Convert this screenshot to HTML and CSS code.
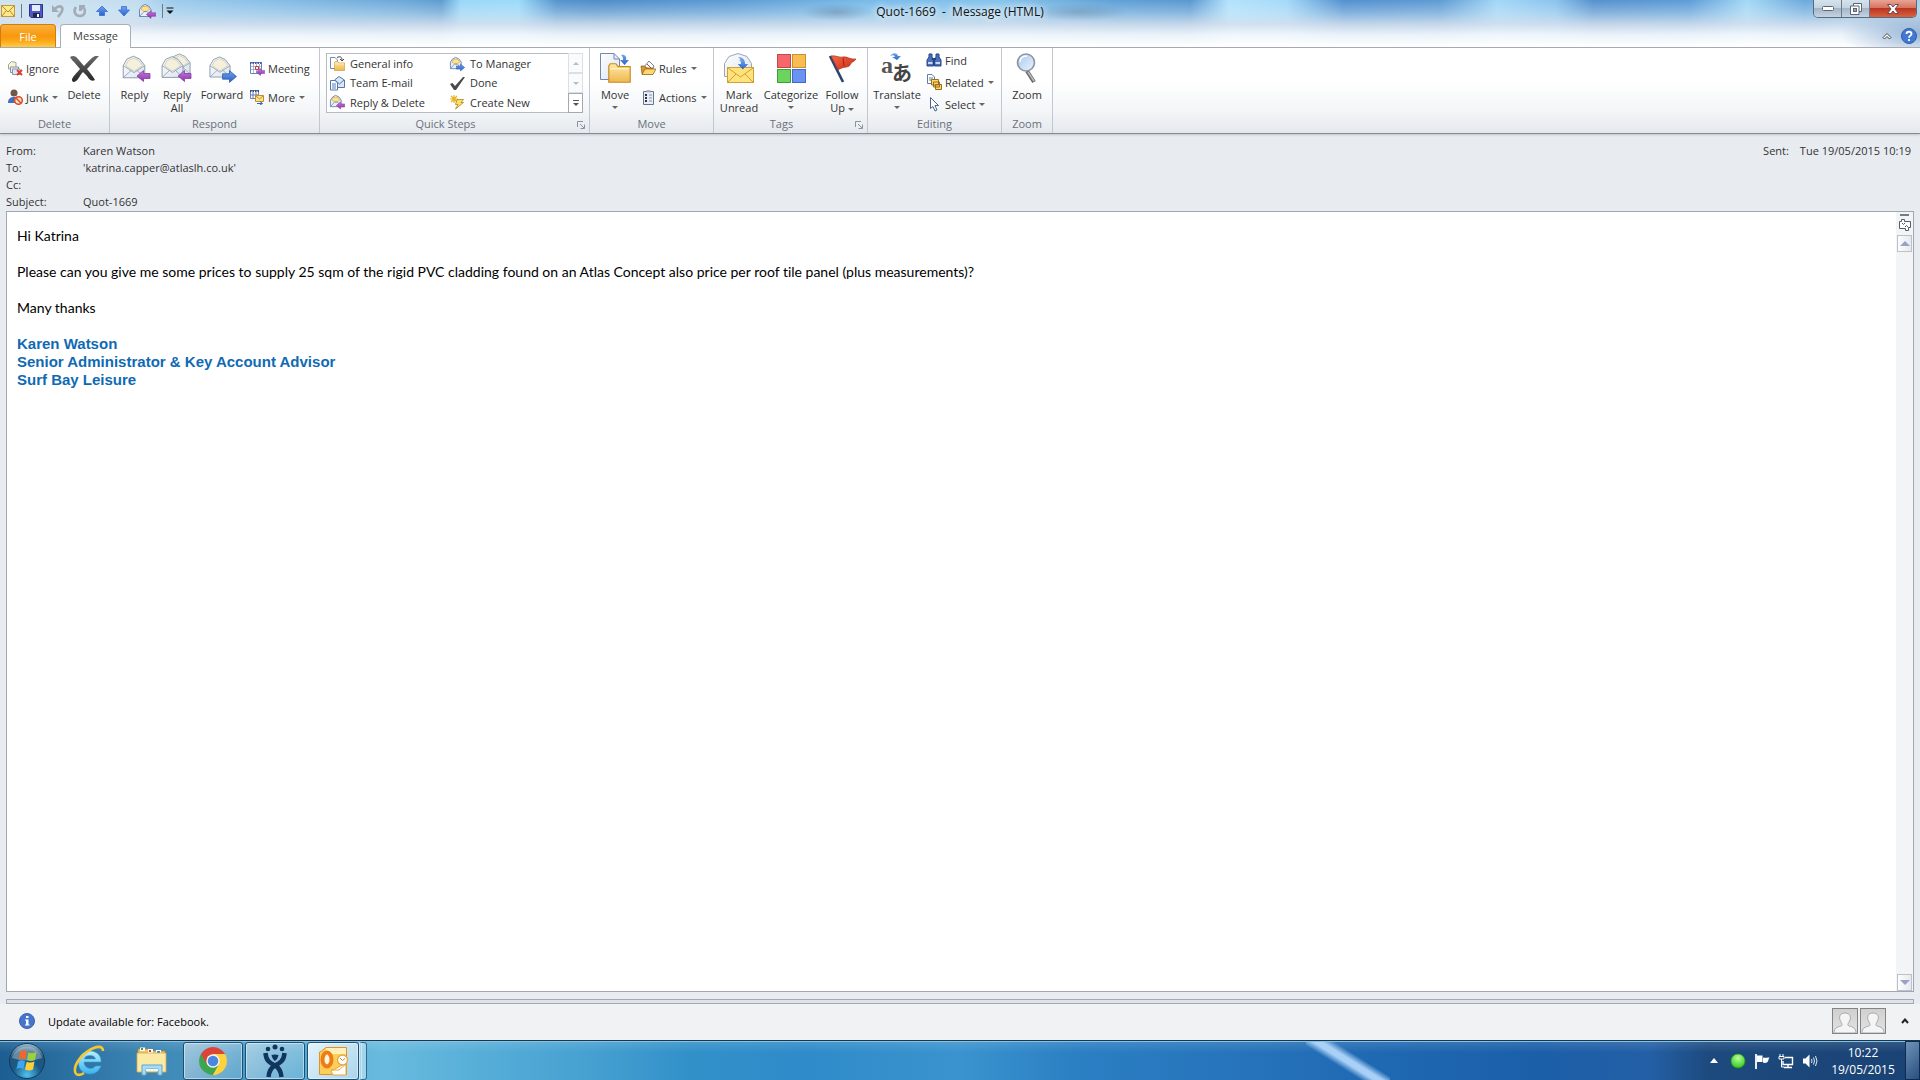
FILE: index.html
```html
<!DOCTYPE html>
<html lang="en">
<head>
<meta charset="utf-8">
<title>Quot-1669 - Message (HTML)</title>
<link rel="stylesheet" href="styles.css">
</head>
<body>
<svg class="defs" aria-hidden="true">
  <defs>
    <linearGradient id="gFold" x1="0" y1="0" x2="0" y2="1"><stop offset="0" stop-color="#ffe9a6"/><stop offset="1" stop-color="#eeb84e"/></linearGradient>
    <linearGradient id="gPaper" x1="0" y1="0" x2="1" y2="1"><stop offset="0" stop-color="#ffffff"/><stop offset="1" stop-color="#d9e3ee"/></linearGradient>
    <linearGradient id="gPurple" x1="0" y1="0" x2="0" y2="1"><stop offset="0" stop-color="#c77be0"/><stop offset="1" stop-color="#8a35ad"/></linearGradient>
    <linearGradient id="gBlue" x1="0" y1="0" x2="0" y2="1"><stop offset="0" stop-color="#6fa4ee"/><stop offset="1" stop-color="#2b62c6"/></linearGradient>
    <linearGradient id="gDark" x1="0" y1="0" x2="0" y2="1"><stop offset="0" stop-color="#6a6a6a"/><stop offset="1" stop-color="#262626"/></linearGradient>
    <linearGradient id="gFlag" x1="0" y1="0" x2="1" y2="1"><stop offset="0" stop-color="#f5694a"/><stop offset="1" stop-color="#c92a12"/></linearGradient>
    <radialGradient id="gOrb" cx=".5" cy=".9" r=".9"><stop offset="0" stop-color="#4fc3ee"/><stop offset=".45" stop-color="#1a5a86"/><stop offset=".75" stop-color="#23557a"/><stop offset="1" stop-color="#a9c6d8"/></radialGradient>
    <radialGradient id="gGreen" cx=".5" cy=".3" r=".7"><stop offset="0" stop-color="#b6ff9a"/><stop offset="1" stop-color="#35c81c"/></radialGradient>
    <linearGradient id="gIe" x1="0" y1="0" x2="0" y2="1"><stop offset="0" stop-color="#b9f0ff"/><stop offset="1" stop-color="#35b4ee"/></linearGradient>
    <linearGradient id="gLens" x1="0" y1="0" x2="1" y2="1"><stop offset="0" stop-color="#a9c8ee"/><stop offset="1" stop-color="#e9f4ff"/></linearGradient>

    <symbol id="envelope" viewBox="0 0 32 32">
      <path d="M4.500 14.500 8.500 7.500 15.500 4.500 22 7.500 27.500 14.500V27.500H4.500Z" fill="url(#gPaper)" stroke="#8794a6"/>
      <path d="M7 14.500 10 9 15.500 6.500 21 9 25 14.500 16 20.500Z" fill="#f5f0dc" stroke="#c9c6b4" stroke-width=".8"/>
      <path d="M4.500 27.500 13 19.500M27.500 27.500 19 19.500M4.500 14.500 16 22 27.500 14.500" fill="none" stroke="#8e9bb0" stroke-width=".9"/>
    </symbol>
    <symbol id="arrow-left" viewBox="0 0 14 12"><path d="M.500 6 7 .500V3.500H13.500V8.500H7V11.500Z" fill="url(#gPurple)" stroke="#7c2f9c" stroke-width=".7"/></symbol>
    <symbol id="arrow-right" viewBox="0 0 14 12"><path d="M13.500 6 7 .500V3.500H.500V8.500H7V11.500Z" fill="url(#gBlue)" stroke="#2a57a8" stroke-width=".7"/></symbol>
    <symbol id="mail-small" viewBox="0 0 16 16">
      <path d="M1.500 6.500 4 3 7 1.500 10.500 3 13 6.500V13.500H1.500Z" fill="#e8eefa" stroke="#6f88b4"/>
      <path d="M3 6.500 5 3.500H9.500L11.500 6.500 7.500 9Z" fill="#ffe38a" stroke="#d8a93a" stroke-width=".7"/>
      <path d="M1.500 13.500 6 8.500H9L13 13.500" fill="none" stroke="#6f88b4" stroke-width=".8"/>
    </symbol>
    <symbol id="folder" viewBox="0 0 16 14"><path d="M.500 13.500V2L1.500.500H5.500L7 2.500H15.500V13.500Z" fill="url(#gFold)" stroke="#c58a22" stroke-width=".8"/><path d="M1.500 4H14.500" stroke="#fff3c4"/></symbol>
    <symbol id="person" viewBox="0 0 24 24"><path d="M1 24C1 19 4 18 8 17 10 16 9 15 8 13 5 8 7 4 12 4S19 8 16 13C15 15 14 16 16 17 20 18 23 19 23 24Z" fill="#f5f5f5" stroke="#a9a9a9"/></symbol>
  </defs>
</svg>

<header class="titlebar">
  <div class="titlerow">
    <nav class="quick-access" aria-label="Quick access">
      <svg class="qa-mail" width="14" height="14" viewBox="0 0 14 14"><rect x=".500" y="1.500" width="13" height="11" fill="#ffe78c" stroke="#c39a35"/><path d="M1 2 7 8 13 2M1 12 5 7M13 12 9 7" fill="none" stroke="#b58a2b"/></svg>
      <i class="rule"></i>
      <button aria-label="Save"><svg width="16" height="16" viewBox="0 0 16 16"><path d="M1.500 1.500H14.500V14.500H3L1.500 13Z" fill="#5058c4" stroke="#2c3388"/><path d="M4 2H12V8H4Z" fill="#e4ecff"/><path d="M5 10H12V14.500H5Z" fill="#20264f"/><path d="M9 11H11V14H9Z" fill="#fff"/></svg></button>
      <button aria-label="Undo"><svg width="16" height="16" viewBox="0 0 16 16"><path d="M5 6C7 3 12 2 12.500 6 12.500 9 10 11 8 14" fill="none" stroke="#a3acb6" stroke-width="2.600"/><path d="M2 2V9H9Z" fill="#a3acb6"/></svg></button>
      <button aria-label="Redo"><svg width="16" height="16" viewBox="0 0 16 16"><path d="M4 4C1 8 3 13 8 13S14 8 12 5" fill="none" stroke="#a3acb6" stroke-width="2.600"/><path d="M7 2V8H9L13 4V2Z" fill="#a3acb6"/></svg></button>
      <button aria-label="Previous item"><svg width="16" height="16" viewBox="0 0 16 16"><path d="M8 3 13.500 8.500H10.500V12.500H5.500V8.500H2.500Z" fill="url(#gBlue)" stroke="#3a6be0" stroke-width=".8"/></svg></button>
      <button aria-label="Next item"><svg width="16" height="16" viewBox="0 0 16 16"><path d="M8 13 13.500 7H10.500V3.500H5.500V7H2.500Z" fill="url(#gBlue)" stroke="#3a6be0" stroke-width=".8"/></svg></button>
      <button aria-label="Reply and delete"><svg width="18" height="16" viewBox="0 0 18 16"><use href="#mail-small" width="16" height="16"/><use href="#arrow-left" x="8" y="7" width="10" height="9"/></svg></button>
      <span class="customise"><i class="rule"></i><button aria-label="Customise toolbar"><svg width="8" height="8" viewBox="0 0 8 8"><path d="M.500 1H7.500" stroke="#111"/><path d="M.500 3.500H7.500L4 7Z" fill="#111"/></svg></button></span>
    </nav>
    <h1>Quot-1669&nbsp; -&nbsp; Message (HTML)</h1>
    <div class="window-controls">
      <button aria-label="Minimise"><svg width="12" height="6" viewBox="0 0 12 6"><rect x=".500" y=".500" width="11" height="4" rx="1" fill="#fff" stroke="#5a6673"/></svg></button>
      <button aria-label="Restore"><svg width="12" height="12" viewBox="0 0 12 12"><path d="M3.500.500H11.500V8.500H9V11.500H.500V3H3.500Z" fill="#fff" stroke="#5a6673"/><path d="M3.500 3H9V8.500" fill="none" stroke="#5a6673"/><rect x="3.500" y="5.500" width="3" height="3" fill="#9aa6b4" stroke="#5a6673"/></svg></button>
      <button class="close" aria-label="Close"><svg width="12" height="10" viewBox="0 0 12 10"><path d="M.500.500H4L6 3 8 .500H11.500L8 5 11.500 9.500H8L6 7 4 9.500H.500L4 5Z" fill="#fff" stroke="#6b4a50"/></svg></button>
    </div>
  </div>
  <div class="tabrow">
    <button class="tab file">File</button>
    <button class="tab current">Message</button>
    <span class="spacer"></span>
    <button class="mini" aria-label="Minimise ribbon"><svg width="10" height="8" viewBox="0 0 10 8"><path d="M1 5.500 5 1.500 9 5.500 7.500 7 5 4.500 2.500 7Z" fill="#fff" stroke="#3c4149"/></svg></button>
    <button class="mini" aria-label="Help"><svg width="16" height="16" viewBox="0 0 16 16"><circle cx="8" cy="8" r="7.500" fill="#4379d2" stroke="#2c5cab"/><path d="M5.500 6C5.500 3 10.500 3 10.500 6 10.500 7.700 8 7.600 8 9.800M8 11V13" fill="none" stroke="#fff" stroke-width="1.800"/></svg></button>
  </div>
</header>

<section class="ribbon" aria-label="Message ribbon">
  <div class="group g-delete">
    <div class="tools">
      <div class="pair">
        <button class="small"><svg viewBox="0 0 16 16"><path d="M1.500 4.500 4.500 1.500 9 2.500V9H1.500Z" fill="#fff3c8" stroke="#98a2b2"/><path d="M3.500 7H11.500V12.500H3.500Z" fill="#edf1f7" stroke="#8793a6"/><path d="M5.500 9H13V14.500H5.500Z" fill="#dfe6f0" stroke="#8793a6"/><path d="M10 10 15 15M15 10 10 15" stroke="#dd3a30" stroke-width="1.800"/></svg>Ignore</button>
        <button class="small"><svg viewBox="0 0 16 16"><circle cx="7" cy="4" r="3.500" fill="#6e5848"/><path d="M1 14C1 9 4 8 7 8S12 9 12 14Z" fill="#456fbd"/><circle cx="11.500" cy="11.500" r="3.800" fill="#fbe2d6" stroke="#e14b22" stroke-width="1.500"/><path d="M9 9 14 14" stroke="#e14b22" stroke-width="1.500"/></svg>Junk<i class="caret"></i></button>
      </div>
      <button class="big"><svg viewBox="0 0 32 32"><path d="M2 5C5 3 8 4 10 7L16 14C20 10 23 6 27 4H31L19 17C22 21 25 24 27 28 23 30 21 27 19 24L15 20C11 24 10 30 5 30 2 27 6 24 12 17L6 10C4 8 3 7 2 5Z" fill="url(#gDark)"/></svg>Delete</button>
    </div>
    <h2>Delete</h2>
  </div>
  <div class="group g-respond">
    <div class="tools">
      <button class="big"><svg viewBox="0 0 32 32"><use href="#envelope" width="30" height="30"/><use href="#arrow-left" x="17" y="18" width="15" height="12"/></svg>Reply</button>
      <button class="big"><svg viewBox="0 0 32 32"><use href="#envelope" x="5" y="-2" width="28" height="28"/><use href="#envelope" x="-3" y="0" width="29" height="30"/><use href="#arrow-left" x="16" y="18" width="15" height="12"/></svg><span>Reply<br>All</span></button>
      <button class="big"><svg viewBox="0 0 32 32"><use href="#envelope" width="28" height="30"/><use href="#arrow-right" x="16" y="18" width="15" height="13"/></svg>Forward</button>
      <div class="pair">
        <button class="small"><svg viewBox="0 0 16 16"><path d="M1.500 2.500H12.500V13.500H1.500Z" fill="#fff" stroke="#6b83b8"/><path d="M1 3H13" stroke="#3d5fa8" stroke-width="2" stroke-dasharray="1.500 1"/><path d="M4.500 4V13M7.500 4V13M10.500 4V13M2 6.500H12M2 9.500H12" stroke="#93a8d2" stroke-width=".8"/><path d="M6.500 6.500H9.500V9.500H6.500Z" fill="#fff" stroke="#d8342b"/><use href="#arrow-left" x="7" y="8" width="9" height="8"/></svg>Meeting</button>
        <button class="small"><svg viewBox="0 0 16 16"><path d="M1.500 1.500H9.500V9.500H1.500Z" fill="#fff" stroke="#6b83b8"/><path d="M1 2H10" stroke="#2f4a87" stroke-width="2" stroke-dasharray="1.500 1"/><path d="M4 3V9M7 3V9M2 6H9" stroke="#5671ab" stroke-width=".9"/><path d="M6.500 6.500H14.500V12.500H6.500Z" fill="#ffe38a" stroke="#c08f2b"/><path d="M7 7 10.500 10 14 7" fill="none" stroke="#c08f2b"/><path d="M8 14.500H13M11 12.500 13.500 14.500 11 16" fill="none" stroke="#2b62c6"/></svg>More<i class="caret"></i></button>
      </div>
    </div>
    <h2>Respond</h2>
  </div>
  <div class="group g-quick">
    <div class="tools">
      <div class="gallery">
        <button class="small"><svg viewBox="0 0 16 16"><path d="M1.500 1.500H6L8.500 4V12.500H1.500Z" fill="#fff" stroke="#6f88b4"/><path d="M8 1.500C11 0 13 1 13 4M11 3 13 5 15 3" fill="none" stroke="#444"/><use href="#folder" x="5" y="5" width="11" height="10"/></svg>General info</button>
        <button class="small"><svg viewBox="0 0 16 16"><use href="#mail-small" width="15" height="15"/><use href="#arrow-right" x="7" y="7" width="9" height="9"/></svg>To Manager</button>
        <button class="small"><svg viewBox="0 0 16 16"><path d="M5.500 5 10 1.500 15.500 5V12.500H5.500Z" fill="#dbe8f8" stroke="#5777a8"/><path d="M6 5 10.500 9 15 5" fill="none" stroke="#5777a8"/><path d="M1.500 5.500H6L8.500 8V15H1.500Z" fill="#fff" stroke="#5777a8"/><path d="M3 9H7M3 11H7M3 13H7" stroke="#4f7fc0"/></svg>Team E-mail</button>
        <button class="small"><svg viewBox="0 0 16 16"><path d="M1 9 3.500 8 6 11 14 2 16 2 7 15H5Z" fill="#4a4a4a"/></svg>Done</button>
        <button class="small"><svg viewBox="0 0 16 16"><use href="#mail-small" width="15" height="15"/><use href="#arrow-left" x="7" y="7" width="9" height="9"/></svg>Reply &amp; Delete</button>
        <button class="small"><svg viewBox="0 0 16 16"><path d="M5 1V9M1 5H9M2 2 8 8M8 2 2 8" stroke="#e9b320" stroke-width="1.200"/><path d="M8 5.500H14.500L12 8.500H14.500L6.500 15 9 10.500H6.500Z" fill="#ffe35c" stroke="#a8842a" stroke-width=".8"/></svg>Create New</button>
      </div>
      <div class="gallery-scroll">
        <button aria-label="Scroll up" disabled><i class="caret up"></i></button>
        <button aria-label="Scroll down" disabled><i class="caret"></i></button>
        <button class="more" aria-label="More quick steps"><svg width="8" height="8" viewBox="0 0 8 8"><path d="M1 1.500H7" stroke="#555"/><path d="M1 4H7L4 7Z" fill="#555"/></svg></button>
      </div>
    </div>
    <h2>Quick Steps</h2>
    <button class="launcher" aria-label="Quick Steps options"><svg width="8" height="8" viewBox="0 0 8 8"><path d="M.500 6V.500H6M3 3 7 7M7.500 3.500V7.500H3.500" fill="none" stroke="#8c939e"/></svg></button>
  </div>
  <div class="group g-move">
    <div class="tools">
      <button class="big"><svg viewBox="0 0 32 32"><path d="M1.500 1.500H15L20.500 7V27.500H1.500Z" fill="url(#gPaper)" stroke="#6f88b4"/><path d="M15 1.500V7H20.500" fill="none" stroke="#6f88b4"/><path d="M22 3C26 2 28 5 27 8H30L25.500 13 21 8H24C24 6 24 5 22 3Z" fill="url(#gBlue)"/><use href="#folder" x="9" y="11" width="23" height="20"/></svg>Move<i class="caret"></i></button>
      <div class="pair">
        <button class="small"><svg viewBox="0 0 16 16"><path d="M4 7 9 1 14 6 12 10Z" fill="#fff" stroke="#6f7f98"/><path d="M7 4 11 8" stroke="#c33"/><path d="M1 6H5L6 8H13V14H2Z" fill="#d79a28" stroke="#8a5c14" stroke-width=".7"/><path d="M2 14.500 5 9H16L13 14.500Z" fill="#ffd970" stroke="#8a5c14" stroke-width=".7"/></svg>Rules<i class="caret"></i></button>
        <button class="small"><svg viewBox="0 0 16 16"><path d="M3.500 2.500H13.500V15.500H3.500Z" fill="#e9eef6" stroke="#66768f"/><path d="M6.500 1H10.500V3.500H6.500Z" fill="#aab6c8"/><path d="M5 6H7M5 9H7M5 12H7" stroke="#333" stroke-width="2"/><path d="M9 6H12M9 9H12M9 12H12" stroke="#7f93b5"/></svg>Actions<i class="caret"></i></button>
      </div>
    </div>
    <h2>Move</h2>
  </div>
  <div class="group g-tags">
    <div class="tools">
      <button class="big"><svg viewBox="0 0 32 32"><path d="M1.500 11.500 6 4.500 15 1.500 24 4.500 28.500 11.500V24.500H1.500Z" fill="url(#gPaper)" stroke="#9aa6b6"/><path d="M15 5C21 5 22 9 22 12H25L20 18 15 12H18.500C18.500 9 18 7 15 5Z" fill="url(#gBlue)"/><rect x="4.500" y="15.500" width="26" height="15" fill="#ffe27a" stroke="#cf9f3a"/><path d="M5 16 17.500 25 30 16M5 30 13 22M30 30 22 22" fill="none" stroke="#cf9f3a"/><path d="M16 8C21 7 21 10 21 12H24.500L19.800 17.500 15 12H18C18 10 18 9 16 8Z" fill="url(#gBlue)"/></svg><span>Mark<br>Unread</span></button>
      <button class="big"><svg viewBox="0 0 32 32"><g stroke-width="1"><rect x="2.500" y="2.500" width="13" height="13" fill="#f5676b" stroke="#c4474b"/><rect x="17.500" y="2.500" width="13" height="13" fill="#f8bd4e" stroke="#c9912c"/><rect x="2.500" y="17.500" width="13" height="13" fill="#6ad45e" stroke="#3f9f37"/><rect x="17.500" y="17.500" width="13" height="13" fill="#6a92f2" stroke="#4468c4"/></g></svg>Categorize<i class="caret"></i></button>
      <button class="big"><svg viewBox="0 0 32 32"><path d="M4 4 17 30" stroke="#2c4470" stroke-width="2.600"/><path d="M5 4C10 3 13 6 17 5S24 8 30 7C28 10 25 10 24 13S17 14 12 18Z" fill="url(#gFlag)" stroke="#a3301c" stroke-width=".7"/><path d="M17 6 18 14" stroke="#a8210e"/></svg><span>Follow<br>Up<i class="caret"></i></span></button>
    </div>
    <h2>Tags</h2>
    <button class="launcher" aria-label="Tags options"><svg width="8" height="8" viewBox="0 0 8 8"><path d="M.500 6V.500H6M3 3 7 7M7.500 3.500V7.500H3.500" fill="none" stroke="#8c939e"/></svg></button>
  </div>
  <div class="group g-editing">
    <div class="tools">
      <button class="big"><svg viewBox="0 0 32 32"><text x="0" y="21" class="glyph-latin">a</text><text x="11" y="29" class="glyph-kana">あ</text><path d="M9 4C13 0 16 1 17 4H20L16 8 11 5H14C13 3 12 3 9 4Z" fill="url(#gBlue)"/></svg>Translate<i class="caret"></i></button>
      <div class="triple">
        <button class="small"><svg viewBox="0 0 16 16"><path d="M3 2H6V5L7.500 8V14H1V8L3 5ZM10 2H13V5L15 8V14H8.500V8L10 5Z" fill="#4a70bb" stroke="#26457f"/><path d="M2 11H6.500M9.500 11H14" stroke="#c7d7f5" stroke-width="2"/><path d="M6 7H10" stroke="#26457f" stroke-width="2"/></svg>Find</button>
        <button class="small"><svg viewBox="0 0 16 16"><path d="M1.500.500H6L8.500 3V9.500H1.500Z" fill="#fff" stroke="#5f7cab"/><path d="M3 4H7M3 6H7" stroke="#5f7cab"/><path d="M5.500 5.500H12.500V11H5.500ZM7.500 8H13.500V13H7.500ZM9.500 10.500H15.500V15.500H9.500Z" fill="#ffd768" stroke="#9a6d1a"/></svg>Related<i class="caret"></i></button>
        <button class="small"><svg viewBox="0 0 16 16"><path d="M4.500 1.500V12.500L7 10.500 9 15 11 14 9 9.500H12.500Z" fill="#fff" stroke="#4b6391"/></svg>Select<i class="caret"></i></button>
      </div>
    </div>
    <h2>Editing</h2>
  </div>
  <div class="group g-zoom">
    <div class="tools">
      <button class="big"><svg viewBox="0 0 32 32"><path d="M16 19 23 30" stroke="#6d6d72" stroke-width="4"/><path d="M17 20 23 29" stroke="#b9b9be" stroke-width="1.500"/><circle cx="15" cy="10.500" r="8.500" fill="url(#gLens)" stroke="#8e959f" stroke-width="1.600"/><path d="M9 10C9 6 12 4 16 4" fill="none" stroke="#fff" stroke-width="1.500"/></svg>Zoom</button>
    </div>
    <h2>Zoom</h2>
  </div>
</section>

<main class="reader">
  <div class="envelope-info">
    <dl>
      <dt>From:</dt><dd>Karen Watson</dd>
      <dt>To:</dt><dd>'katrina.capper@atlaslh.co.uk'</dd>
      <dt>Cc:</dt><dd></dd>
      <dt>Subject:</dt><dd>Quot-1669</dd>
    </dl>
    <p class="sent"><span>Sent:</span><time datetime="2015-05-19T10:19">Tue 19/05/2015 10:19</time></p>
  </div>
  <div class="message">
    <article>
      <p>Hi Katrina</p>
      <p>Please can you give me some prices to supply 25 sqm of the rigid PVC cladding found on an Atlas Concept also price per roof tile panel (plus measurements)?</p>
      <p>Many thanks</p>
      <address>Karen Watson<br>Senior Administrator &amp; Key Account Advisor<br>Surf Bay Leisure</address>
    </article>
    <div class="scrollbar">
      <i class="split"></i>
      <button class="ruler" aria-label="Browse"><svg width="12" height="12" viewBox="0 0 12 12"><path d="M.500 2.500H2.500V.500H5.500V2.500H11.500V8.500H9.500V11.500H6.500V9.500H.500Z" fill="#fff" stroke="#555d68"/><path d="M3 4 4.500 5.500 6 4M6 8 7.500 6.500 9 8" fill="none" stroke="#555d68"/></svg></button>
      <button class="step" aria-label="Scroll up"><i class="tri up"></i></button>
      <span class="track"></span>
      <button class="step" aria-label="Scroll down"><i class="tri"></i></button>
    </div>
  </div>
  <div class="divider"></div>
</main>

<footer class="people-pane">
  <svg width="16" height="16" viewBox="0 0 16 16"><circle cx="8" cy="8" r="7.500" fill="#4675cc" stroke="#3a62b2"/><path d="M7 3H9.500V5H7ZM6 6.500H9.500V11.500H10.500V12.500H6V11.500H7V7.500H6Z" fill="#fff"/></svg>
  <p>Update available for: Facebook.</p>
  <span class="spacer"></span>
  <span class="avatar"><svg viewBox="0 0 24 24"><use href="#person"/></svg></span>
  <span class="avatar"><svg viewBox="0 0 24 24"><use href="#person"/></svg></span>
  <button class="expand" aria-label="Expand people pane"><svg width="8" height="6" viewBox="0 0 8 6"><path d="M1 5 4 1.500 7 5" fill="none" stroke="#222" stroke-width="2"/></svg></button>
</footer>

<nav class="taskbar" aria-label="Taskbar">
  <button class="start" aria-label="Start"><svg width="38" height="38" viewBox="0 0 38 38"><circle cx="19" cy="19" r="17.500" fill="url(#gOrb)" stroke="#12395a"/><path d="M4 16A15.500 15.500 0 0 1 34 16Q19 21 4 16Z" fill="#ffffff" opacity=".3"/><path d="M12 10Q15 7.500 19 9.500L17.500 17.500Q14 15.500 10.500 18Z" fill="#f0672c"/><path d="M20.500 10.500Q24 12 28.500 10L27 18Q23 20 19 18Z" fill="#9bd13d"/><path d="M10 19.500Q13 17.500 17 19L15.500 27Q12 25 8.500 27Z" fill="#3ea6ea"/><path d="M18.700 19.700Q22 21.500 26.500 19.500L25 27.500Q21.500 29.500 17 27.500Z" fill="#ffcf3a"/></svg></button>
  <button class="pin" aria-label="Internet Explorer"><svg width="34" height="34" viewBox="0 0 34 34"><path d="M29 18H12C12 22 15 24.500 18.500 24.500 21 24.500 22.500 23.500 23.500 22H29C27 27 23 30 18 30 11 30 6.500 25 6.500 18.500S11 7 18 7 29.500 12 29 18ZM12.200 15H23.500C23 12.500 21 11.500 18 11.500S12.800 12.500 12.200 15Z" fill="url(#gIe)" stroke="#3a9fd4" stroke-width=".6"/><path d="M31 7C31 1 24 2 16 7 7 13 1 23 3.500 29 5 32 9 31 12 29" fill="none" stroke="#f7c62f" stroke-width="2.600"/></svg></button>
  <button class="pin" aria-label="File Explorer"><svg width="34" height="34" viewBox="0 0 34 34"><path d="M3 5H14L15 7H30V28H3Z" fill="#e8c56a" stroke="#b58c34" stroke-width=".8"/><path d="M5 3.500H10V7H5ZM13 5H18V9H13ZM21 6H26V10H21Z" fill="#fff"/><path d="M6 4H8V6H6Z" fill="#35a24b"/><path d="M14 6H16V8H14Z" fill="#d4372d"/><path d="M22 7H25V9H22Z" fill="#3584d4"/><path d="M2 9H31V28H2Z" fill="#fbe9a6" stroke="#d0a94f" stroke-width=".8"/><path d="M7 31V21H27V31H23V25H11V31Z" fill="#a8dcf3" stroke="#5ea7cf"/><path d="M11 26H23" stroke="#e9f8ff" stroke-width="2"/></svg></button>
  <button class="task" aria-label="Google Chrome"><svg width="30" height="30" viewBox="0 0 30 30"><path d="M15 15V29A14 14 0 0 1 2.900 8Z" fill="#3fa650"/><path d="M15 15 27.100 8A14 14 0 0 1 15 29Z" fill="#fdd23c"/><path d="M9 18.500 15 29 21 18.500Z" fill="#3fa650"/><path d="M15 29 21.100 18.500 24 18 20 28Z" fill="#fdd23c"/><path d="M15 8H27.100L21 18.500Z" fill="#fdd23c"/><path d="M2.900 8 9 18.500 15 8Z" fill="#dc4437"/><path d="M2.900 8A14 14 0 0 1 27.100 8H15Z" fill="#dc4437"/><circle cx="15" cy="15" r="6.700" fill="#f4f4f4"/><circle cx="15" cy="15" r="5.300" fill="#4a86e0"/></svg></button>
  <button class="task" aria-label="Jira"><svg width="32" height="34" viewBox="0 0 32 34"><g fill="#12355f"><circle cx="9" cy="5" r="2.300"/><circle cx="16" cy="3" r="2.500"/><circle cx="23" cy="5" r="2.300"/><path d="M12.500 11Q16 10 19.500 11C19 14 17.500 16 16 17 14.500 16 13 14 12.500 11Z"/></g><path d="M6.500 9C7 17 11 19 16 21.500 20.500 24 22 27 22.500 33M25.500 9C25 17 21 19 16 21.500 11.500 24 10 27 9.500 33" fill="none" stroke="#12355f" stroke-width="4.500"/></svg></button>
  <button class="task active" aria-label="Outlook"><svg width="32" height="32" viewBox="0 0 32 32"><path d="M4.500 6 9 2.500H29.500V29.500H2.500V7Z" fill="#fbcf58" stroke="#e3921f"/><path d="M9 3H29V9H9Z" fill="#fff0b8"/><path d="M14 26 29 18V30H16Z" fill="#fff" stroke="#f0a531"/><path d="M14 25 22 25 29 19" fill="none" stroke="#f0a531"/><ellipse cx="10" cy="14.500" rx="4.500" ry="7" fill="#fff6df" stroke="#ee7d17" stroke-width="4"/><circle cx="25.500" cy="15" r="5" fill="#fff" stroke="#e7a843" stroke-width="1.300"/><path d="M23 13 25.500 15.500 28 13.500" fill="none" stroke="#d08426"/></svg></button>
  <i class="stack"></i>
  <span class="spacer"></span>
  <div class="tray">
    <button class="chevron" aria-label="Show hidden icons"><svg width="8" height="5" viewBox="0 0 8 5"><path d="M4 0 8 5H0Z" fill="#fff"/></svg></button>
    <button aria-label="Status"><svg width="16" height="16" viewBox="0 0 16 16"><circle cx="8" cy="8" r="7" fill="url(#gGreen)" stroke="#2a9a1b" stroke-width=".7"/></svg></button>
    <button aria-label="Action Center"><svg width="16" height="16" viewBox="0 0 16 16"><path d="M2 1V16" stroke="#fff" stroke-width="1.800"/><path d="M3 2.500H8.500V9H3ZM9 4.500C11 5.500 13 4 15.500 4.500 14 6 15 8 13 9.500 11 10 10 10 9 9.500Z" fill="#fff"/></svg></button>
    <button aria-label="Network"><svg width="16" height="16" viewBox="0 0 16 16"><path d="M7 4.500H14.500V11.500H5V8M10 11.500V14M6 14.500H14" fill="none" stroke="#fff" stroke-width="1.400"/><path d="M2 1V3M5 1V3M1 3.500H6V6H1ZM3.500 6V14H6" fill="none" stroke="#fff"/></svg></button>
    <button aria-label="Volume"><svg width="16" height="16" viewBox="0 0 16 16"><path d="M1 5.500H3.500L7.500 1.500V14.500L3.500 10.500H1Z" fill="#fff"/><path d="M9.500 6Q10.500 8 9.500 10M11.500 4.500Q13.500 8 11.500 11.500M13.500 3Q16.500 8 13.500 13" fill="none" stroke="#dfeaf7"/></svg></button>
  </div>
  <button class="clock"><span>10:22</span><span>19/05/2015</span></button>
  <button class="show-desktop" aria-label="Show desktop"></button>
</nav>
</body>
</html>
```
FILE: styles.css
```css
* { box-sizing: border-box; }
html, body { height: 100%; margin: 0; }
body {
  display: flex;
  flex-direction: column;
  overflow: hidden;
  background: #e8ecf1;
  color: #333;
  font: 11px/13px "Open Sans", "Noto Sans", sans-serif;
}
h1, h2, p, dl, dd, dt { margin: 0; font-weight: normal; }
button {
  margin: 0;
  padding: 0;
  border: 0;
  background: none;
  color: inherit;
  font: inherit;
  white-space: nowrap;
}
svg { display: block; flex: none; }
.defs { position: absolute; width: 0; height: 0; }
.spacer { flex: 1; }

/* Title bar and tabs */
.titlebar {
  flex: none;
  border-bottom: 1px solid #a2a8b1;
  background:
    radial-gradient(ellipse 36px 9px at 43.600% 12px, rgba(80, 105, 130, .35), transparent),
    radial-gradient(ellipse 48px 9px at 56.200% 12px, rgba(80, 105, 130, .3), transparent),
    radial-gradient(ellipse 80px 26px at 100% 34px, rgba(130, 165, 205, .8), transparent),
    linear-gradient(180deg, rgba(255, 255, 255, 0) 0, rgba(215, 235, 248, .35) 12px, rgba(214, 225, 238, .85) 24px, rgba(244, 248, 252, .94) 35px, #fff 47px),
    linear-gradient(90deg, #cfe2ef 0, #c3deef 7%, #9dcbeb 9%, #8cc1e8 13%, #6ca8d8 21%, #5d9cd0 23%, #9ad7f8 24%, #9cdafa 27%, #5494cc 29%, #4e8cc8 31%, #5c9bd3 38%, #77bae9 45%, #86c4ec 52%, #5fa0d6 58%, #5a98d0 62%, #b2e3fc 64%, #a5d9f8 67%, #5290cf 70%, #5e9bd2 75%, #a3d7f7 78%, #8ac4ed 81%, #5591cc 83%, #5d9dd6 88%, #a4d8f6 91%, #6ba9db 94%, #a4cfea 100%);
}
.titlerow {
  display: grid;
  grid-template-columns: 1fr auto 1fr;
  height: 24px;
}
.titlerow h1 {
  padding-top: 4px;
  color: #111;
  font-size: 12px;
  line-height: 16px;
  text-shadow: 0 0 6px #fff, 0 0 10px #fff;
}
.quick-access {
  display: flex;
  align-items: center;
  justify-self: start;
  gap: 6px;
  height: 21px;
  padding-left: 1px;
}
.rule { width: 1px; height: 14px; background: #66788c; }
.customise { display: flex; align-items: center; gap: 3px; }
.window-controls {
  display: flex;
  justify-self: end;
  height: 18px;
  margin-right: 3px;
  border: 1px solid #5c6a78;
  border-top: 0;
  border-radius: 0 0 5px 5px;
  overflow: hidden;
}
.window-controls button {
  display: grid;
  place-items: center;
  width: 28px;
  border-right: 1px solid #6c7a89;
  background: linear-gradient(#d5e3ef, #c4d1de 50%, #a5b5c6 50%, #c3d4e5);
}
.window-controls .close {
  width: 46px;
  border: 0;
  background: linear-gradient(#e9a493, #d4705b 50%, #bc3522 50%, #d9623f);
}
.tabrow { display: flex; align-items: flex-end; height: 23px; }
.tab { height: 23px; line-height: 21px; color: #444; border-radius: 4px 4px 0 0; }
.tab.file {
  width: 56px;
  margin-right: 4px;
  border: 1px solid #d27d0a;
  border-bottom: 0;
  background: linear-gradient(#f9b13c, #f8980c 50%, #fba517 70%, #ffcb45);
  color: #fff;
}
.tab.current {
  width: 71px;
  margin-bottom: -1px;
  height: 24px;
  padding-bottom: 2px;
  border: 1px solid #a8b0ba;
  border-bottom: 0;
  background: #fff;
}
.mini { align-self: center; margin-left: 4px; padding: 0 2px; }
.mini:last-child { padding: 0 3px; }

/* Ribbon */
.ribbon {
  display: flex;
  flex: none;
  height: 86px;
  border-bottom: 1px solid #868b93;
  background: linear-gradient(#fff 40%, #f3f5f7 75%, #e5e9ee);
  box-shadow: 0 1px 2px #c0c5cc;
}
.group {
  display: grid;
  grid-template-rows: 67px 18px;
  position: relative;
  border-right: 1px solid #c3c8d0;
}
.group h2 { color: #6a707a; font-size: 11px; line-height: 18px; text-align: center; }
.tools { display: grid; align-items: start; }
.g-delete { width: 110px; }
.g-delete .tools { grid-template-columns: 64px 40px; }
.g-delete .small { padding-left: 7px; }
.g-respond { width: 210px; }
.g-respond .tools { grid-template-columns: 49px 36px 54px auto; }
.g-quick { width: 270px; }
.g-quick .tools { grid-template-columns: 242px 15px; padding: 5px 6px 0; }
.g-quick h2, .g-tags h2 { padding-right: 18px; }
.g-move { width: 124px; }
.g-move .tools { grid-template-columns: 50px auto; }
.g-tags { width: 154px; }
.g-tags .tools { grid-template-columns: 48px 56px 46px; padding-left: 1px; }
.g-editing { width: 134px; }
.g-editing .tools { grid-template-columns: 58px auto; }
.g-zoom { width: 51px; }
.big {
  display: flex;
  flex-direction: column;
  align-items: center;
  padding-top: 4px;
}
.big svg { width: 32px; height: 32px; margin-bottom: 4px; }
.big > .caret { margin: 5px 0 0; }
.small { display: flex; align-items: center; gap: 3px; height: 22px; }
.small svg { width: 16px; height: 16px; }
.pair { display: grid; gap: 7px; padding-top: 9px; }
.triple { display: grid; padding-top: 1px; }
.caret {
  display: inline-block;
  width: 0;
  border: 3px solid transparent;
  border-top-color: #666;
  border-bottom: 0;
  margin-left: 3px;
  vertical-align: middle;
}
.caret.up { border-bottom: 3px solid #bbb; border-top: 0; }
.small .caret { margin-left: 1px; }
.gallery {
  display: grid;
  grid-template-columns: 120px 1fr;
  height: 60px;
  padding-left: 2px;
  border: 1px solid #b6bcc5;
  border-right: 0;
  background: #fff;
}
.gallery .small { height: 19px; gap: 5px; }
.gallery-scroll { display: grid; grid-template-rows: repeat(3, 20px); }
.gallery-scroll button { display: grid; place-items: center; border: 1px solid #dcdfe4; background: #fafbfc; }
.gallery-scroll .caret { margin: 0; }
.gallery-scroll :disabled .caret { border-top-color: #bbb; }
.gallery-scroll :disabled .caret.up { border-top: 0; }
.gallery-scroll .more { border-color: #a3a9b3; background: #fff; }
.launcher { position: absolute; right: 4px; bottom: 4px; }
.glyph-latin { font: bold 24px "Liberation Serif", serif; fill: #555; }
.glyph-kana { font: bold 20px "Noto Sans CJK JP", sans-serif; fill: #444; }

/* Message */
.reader {
  display: flex;
  flex: 1;
  flex-direction: column;
  min-height: 0;
  padding: 8px 6px 0;
}
.envelope-info { display: flex; justify-content: space-between; height: 69px; }
.envelope-info dl {
  display: grid;
  grid-template-columns: 77px auto;
  grid-auto-rows: 17px;
  line-height: 17px;
}
.sent { display: flex; gap: 11px; padding-right: 3px; line-height: 17px; }
.message {
  display: flex;
  flex: 1;
  min-height: 0;
  border: 1px solid #a0a7b2;
  background: #fff;
}
article {
  flex: 1;
  padding: 15px 10px;
  color: #000;
  font: 14px/18px Lato, "Open Sans", sans-serif;
  font-variant-ligatures: none;
}
article p { margin-bottom: 18px; }
address {
  color: #0f6ab4;
  font: bold 15px/18px "Liberation Sans", sans-serif;
}
.scrollbar { display: flex; flex-direction: column; align-items: center; width: 17px; background: #f3f4f6; }
.split { width: 9px; height: 2px; margin: 2px 0 3px; background: #757c88; }
.ruler { height: 16px; padding-bottom: 4px; }
.step {
  display: grid;
  place-items: center;
  width: 15px;
  height: 17px;
  border: 1px solid #bcc1c9;
  background: linear-gradient(90deg, #fdfdfe, #e6e9ee);
}
.tri { width: 0; border: 5px solid transparent; border-top-color: #98a2c4; border-bottom: 0; }
.tri.up { border-top: 0; border-bottom: 5px solid #98a2c4; }
.track { flex: 1; }
.divider { height: 5px; margin: 7px 0 0; border: 1px solid #a3a9b3; background: #e0e4e9; }

/* People pane */
.people-pane {
  display: flex;
  flex: none;
  align-items: center;
  height: 36px;
  padding: 0 11px 2px 19px;
  background: #f1f2f4;
  color: #000;
}
.people-pane p { margin-left: 13px; }
.avatar {
  width: 26px;
  height: 26px;
  margin-right: 2px;
  border: 1px solid #848484;
  background: linear-gradient(#d0d0d0, #e3e3e3);
}
.avatar svg { width: 24px; height: 24px; }
.expand { margin-left: 13px; }

/* Taskbar */
.taskbar {
  display: flex;
  flex: none;
  align-items: center;
  height: 40px;
  border-top: 1px solid #16384f;
  box-shadow: inset 0 1px 0 #86c3e6;
  color: #fff;
  background:
    linear-gradient(rgba(255, 255, 255, .12), rgba(255, 255, 255, 0) 30%),
    linear-gradient(90deg, #1d5e92 0, #3d87b5 8%, #51a5cf 15%, #69bbde 20%, #56aed8 25%, #459fd0 31%, #3290c9 36%, #2f8bc9 42%, #3a93ce 50%, #2b7fc3 56%, #2673bb 65%, #1f68b2 72%, #1b5fa9 80%, #235fa5 86%, #1d4a7e 89%, #1a4274 100%);
  position: relative;
}
/* light streak of the wallpaper seen through the glass */
.taskbar::before {
  content: "";
  position: absolute;
  left: 68%;
  top: 1px;
  width: 84px;
  height: 38px;
  background: linear-gradient(32deg, transparent 38%, rgba(176, 214, 250, .95) 47%, rgba(176, 214, 250, .95) 53%, transparent 62%);
}
.start { width: 54px; padding-left: 8px; }
.pin { display: grid; place-items: center; width: 62px; padding-left: 8px; }
.start + .pin + .pin { width: 67px; padding-left: 4px; }
.task {
  display: grid;
  place-items: center;
  width: 60px;
  height: 38px;
  margin-right: 2px;
  border: 1px solid #1d4f75;
  border-radius: 3px;
  background: linear-gradient(135deg, rgba(255, 255, 255, .5), rgba(255, 255, 255, .12));
  box-shadow: inset 0 0 0 1px rgba(255, 255, 255, .45);
}
.task.active {
  width: 52px;
  margin: 0;
  background: linear-gradient(135deg, #e4f4fd, #a9d4ec);
}
.stack {
  width: 8px;
  height: 38px;
  border: 1px solid #2c6a94;
  border-left: 3px double #cfe8f6;
  border-radius: 0 3px 3px 0;
  background: rgba(255, 255, 255, .4);
}
.tray { display: flex; align-items: center; gap: 8px; }
.tray .chevron { margin-right: 4px; }
.clock {
  display: grid;
  width: 84px;
  margin-left: 3px;
  line-height: 17px;
  font-size: 12px;
}
.show-desktop {
  width: 15px;
  height: 39px;
  border: 1px solid #0f2c50;
  background: linear-gradient(135deg, #6f93b8, #274f80);
}
```
